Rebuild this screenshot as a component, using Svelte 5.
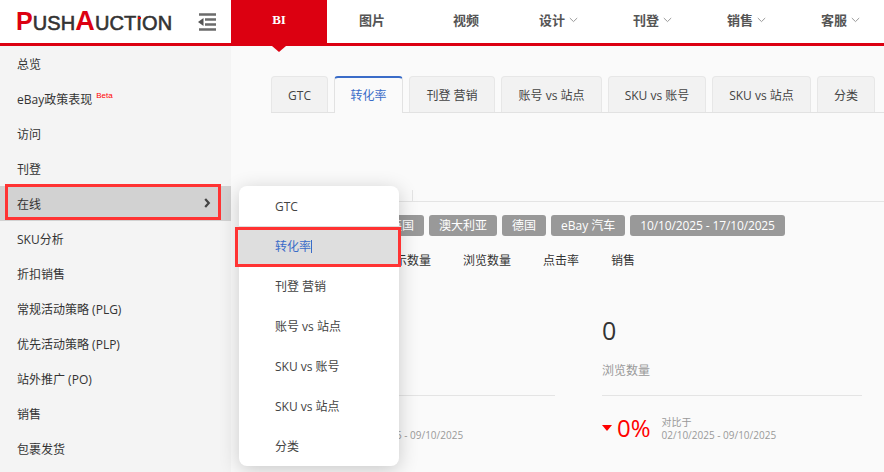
<script>
  const side = ['总览', 'eBay政策表现', '访问', '刊登', '在线', 'SKU分析', '折扣销售', '常规活动策略 (PLG)', '优先活动策略 (PLP)', '站外推广 (PO)', '销售', '包裹发货'];
  const nav = [
    { t: '图片', w: 38 }, { t: '视频', w: 30 }, { t: '设计', w: 38, c: 1 }, { t: '刊登', w: 38, c: 1 },
    { t: '销售', w: 38, c: 1 }, { t: '客服', w: 38, c: 1 }
  ];
  const tabs = [
    { t: 'GTC', w: 57 }, { t: '转化率', w: 69 }, { t: '刊登 营销', w: 86 }, { t: '账号 vs 站点', w: 101 },
    { t: 'SKU vs 账号', w: 98 }, { t: 'SKU vs 站点', w: 99 }, { t: '分类', w: 58 }
  ];
  const menu = ['GTC', '转化率', '刊登 营销', '账号 vs 站点', 'SKU vs 账号', 'SKU vs 站点', '分类'];
  const tags = ['英国', '澳大利亚', '德国', 'eBay 汽车', '10/10/2025 - 17/10/2025'];
  const metrics = ['展示数量', '浏览数量', '点击率', '销售'];
</script>

<div class="page">
  <header class="top">
    <div class="brand">
      <div class="logo"><b>P</b>USH<b class="big">A</b>UCT<span class="dot">I</span>ON</div>
      <svg class="fold" width="18" height="18" viewBox="0 0 18 18">
        <path d="M1 1.5h17M7 6.5h11M7 11.5h11M1 16.5h17" stroke="#6b6b6b" stroke-width="2.4" fill="none" />
        <path d="M5.5 5v8L0 9z" fill="#555" />
      </svg>
    </div>
    <nav class="nav">
      <div class="bi">BI</div>
      {#each nav as n}
        <div class="nav-item" style="width:{n.w}px">
          {n.t}{#if n.c}<svg class="chev" width="9" height="6" viewBox="0 0 9 6"><path d="M.8 1l3.7 3.6L8.2 1" stroke="#999" fill="none" /></svg>{/if}
        </div>
      {/each}
    </nav>
  </header>

  <div class="body">
    <aside class="side">
      {#each side as s, i}
        <div class="side-item" class:on={i === 4}>
          <span>{s}</span>
          {#if i === 1}<sup class="beta">Beta</sup>{/if}
          {#if i === 4}
            <svg class="arrow" width="7" height="10" viewBox="0 0 7 10"><path d="M1.2 1l3.6 4-3.6 4" stroke="#444" stroke-width="2.2" fill="none" /></svg>
          {/if}
        </div>
      {/each}
    </aside>

    <main class="main">
      <div class="tabs">
        {#each tabs as t, i}
          <div class="tab" class:active={i === 1} style="width:{t.w}px">{t.t}</div>
        {/each}
      </div>
      <div class="sub-line"><i></i></div>
      <div class="tags">
        {#each tags as t, i}<span class="tag" class:date={i === 4}>{t}</span>{/each}
      </div>
      <div class="metrics">
        {#each metrics as m}<span>{m}</span>{/each}
      </div>
      <div class="cards">
        <section class="card first">
          <div class="num">0</div>
          <div class="label">展示数量</div>
          <div class="rule"></div>
          <div class="delta">
            <span class="caret"></span><span class="pct">0%</span>
            <div class="cmp">对比于<br />02/10/2025 - 09/10/2025</div>
          </div>
        </section>
        <section class="card">
          <div class="num">0</div>
          <div class="label">浏览数量</div>
          <div class="rule"></div>
          <div class="delta">
            <span class="caret"></span><span class="pct">0%</span>
            <div class="cmp">对比于<br />02/10/2025 - 09/10/2025</div>
          </div>
        </section>
      </div>
    </main>
  </div>

  <div class="popup">
    {#each menu as m, i}
      <div class="pop-item" class:cur={i === 1}>{m}{#if i === 1}<i class="cursor"></i>{/if}</div>
    {/each}
  </div>
  <div class="mark mark-a"></div>
  <div class="mark mark-b"></div>
</div>

<style>
  :global(body) {
    margin: 0;
    overflow: hidden;
  }
  .page {
    position: relative;
    width: 884px;
    height: 472px;
    overflow: hidden;
    background: #fafafa;
    font-family: 'Open Sans', 'Noto Sans CJK SC', sans-serif;
    font-size: 12px;
    color: #333;
  }
  .top {
    display: flex;
    height: 43px;
    background: #fff;
    border-bottom: 3px solid #dc0011;
  }
  .brand {
    width: 231px;
    flex: none;
    box-sizing: border-box;
    padding-left: 16px;
    display: flex;
    align-items: center;
  }
  .logo {
    width: 182px;
    flex: none;
    font-family: 'Liberation Sans', sans-serif;
    font-size: 20px;
    line-height: 30px;
    letter-spacing: 0.1px;
    color: #333;
    white-space: nowrap;
    -webkit-text-stroke: 0.6px #333;
  }
  .logo b {
    font-size: 25px;
    font-weight: 700;
    color: #dc0011;
    -webkit-text-stroke: 0;
  }
  .logo b.big {
    font-size: 27px;
  }
  .dot {
    position: relative;
  }
  .dot::before {
    content: '';
    position: absolute;
    left: 1.5px;
    top: 5px;
    width: 3px;
    height: 2px;
    background: #dc0011;
  }
  .fold {
    flex: none;
  }
  .nav {
    display: flex;
    flex: none;
    gap: 56px;
  }
  .bi {
    position: relative;
    width: 96px;
    height: 46px;
    margin-right: -24px;
    background: #dc0011;
    color: #fff;
    font-family: 'Liberation Serif', serif;
    font-weight: 700;
    font-size: 13px;
    display: flex;
    align-items: center;
    justify-content: center;
    padding-bottom: 6px;
    box-sizing: border-box;
  }
  .bi::after {
    content: '';
    position: absolute;
    left: 41px;
    top: 46px;
    border: 7px solid transparent;
    border-top: 6px solid #dc0011;
    border-bottom: 0;
  }
  .nav-item {
    height: 38px;
    display: flex;
    align-items: center;
    font-size: 13px;
    font-weight: 700;
    color: #555;
    gap: 4px;
    white-space: nowrap;
  }
  .chev {
    margin-top: 2px;
    flex: none;
  }
  .body {
    display: flex;
    height: 426px;
  }
  .side {
    width: 231px;
    flex: none;
    background: #f4f4f4;
  }
  .side-item {
    height: 35px;
    box-sizing: border-box;
    padding: 0 17px;
    display: flex;
    align-items: center;
    position: relative;
    white-space: nowrap;
  }
  .side-item.on {
    background: #d2d2d2;
  }
  .beta {
    color: #f00;
    font-family: 'Liberation Sans', sans-serif;
    font-size: 8px;
    align-self: flex-start;
    margin: 9px 0 0 4px;
    line-height: 12px;
  }
  .arrow {
    position: absolute;
    left: 204px;
    top: 12px;
  }
  .main {
    flex: 1;
    min-width: 0;
    padding: 30px 0 0 40px;
  }
  .tabs {
    display: flex;
    gap: 6px;
    height: 37px;
    box-sizing: border-box;
    border-bottom: 1px solid #e2e2e2;
    white-space: nowrap;
  }
  .tab {
    flex: none;
    height: 36px;
    line-height: 37px;
    text-align: center;
    background: #f2f2f2;
    border: 1px solid #e7e7e7;
    border-bottom: 0;
    border-radius: 4px 4px 0 0;
    box-sizing: border-box;
    color: #444;
  }
  .tab.active {
    height: 37px;
    background: #fafafa;
    color: #3a6cc8;
    border-top: 2px solid #3a6cc8;
    border-left-color: #e2e2e2;
    border-right-color: #e2e2e2;
    line-height: 35px;
  }
  .sub-line {
    margin-top: 77px;
    box-sizing: border-box;
    height: 12px;
    border-bottom: 1px solid #e4e4e4;
    position: relative;
  }
  .sub-line i {
    position: absolute;
    left: 141px;
    top: 0;
    bottom: 0;
    border-left: 1px solid #e4e4e4;
  }
  .tags {
    margin: 13px 0 0 109px;
    display: flex;
    gap: 5px;
    height: 22px;
    white-space: nowrap;
  }
  .tag {
    background: #999;
    color: #fff;
    border-radius: 3px;
    padding: 0 10px;
    line-height: 21px;
    height: 21px;
  }
  .tag.date {
    letter-spacing: -0.13px;
  }
  .metrics {
    margin: 14px 0 0 112px;
    display: flex;
    gap: 32px;
    height: 20px;
    line-height: 20px;
    white-space: nowrap;
  }
  .cards {
    display: flex;
    gap: 47px;
    margin-top: 41px;
    padding-left: 24px;
  }
  .card {
    width: 260px;
    flex: none;
  }
  .num {
    font-size: 25px;
    line-height: 36px;
  }
  .label {
    margin-top: 14px;
    color: #999;
    line-height: 18px;
  }
  .rule {
    margin-top: 15px;
    border-top: 1px solid #e4e4e4;
  }
  .delta {
    margin-top: 18px;
    display: flex;
    align-items: center;
  }
  .first .delta {
    margin-left: -6px;
  }
  .caret {
    border: 5.5px solid transparent;
    border-top: 6px solid #f00;
    border-bottom: 0;
    margin-right: 5px;
  }
  .pct {
    color: #f00;
    font-size: 24px;
    line-height: 28px;
    margin-right: 11px;
  }
  .cmp {
    color: #999;
    font-size: 10px;
    line-height: 13px;
    white-space: nowrap;
    padding-top: 1px;
  }
  .popup {
    position: absolute;
    left: 239px;
    top: 186px;
    width: 160px;
    height: 280px;
    background: #fff;
    border-radius: 8px;
    box-shadow: 0 4px 20px rgba(0, 0, 0, 0.2);
  }
  .pop-item {
    height: 40px;
    line-height: 42px;
    padding-left: 36px;
    color: #444;
  }
  .pop-item.cur {
    background: #dedede;
    color: #3a6cc8;
  }
  .cursor {
    display: inline-block;
    width: 1px;
    height: 13px;
    background: #3a6cc8;
    vertical-align: -2px;
  }
  .mark {
    position: absolute;
    border: 3px solid #f33;
    box-sizing: border-box;
    pointer-events: none;
  }
  .mark-a {
    left: 5px;
    top: 184px;
    width: 216px;
    height: 36px;
  }
  .mark-b {
    left: 235px;
    top: 227px;
    width: 166px;
    height: 40px;
  }
</style>
